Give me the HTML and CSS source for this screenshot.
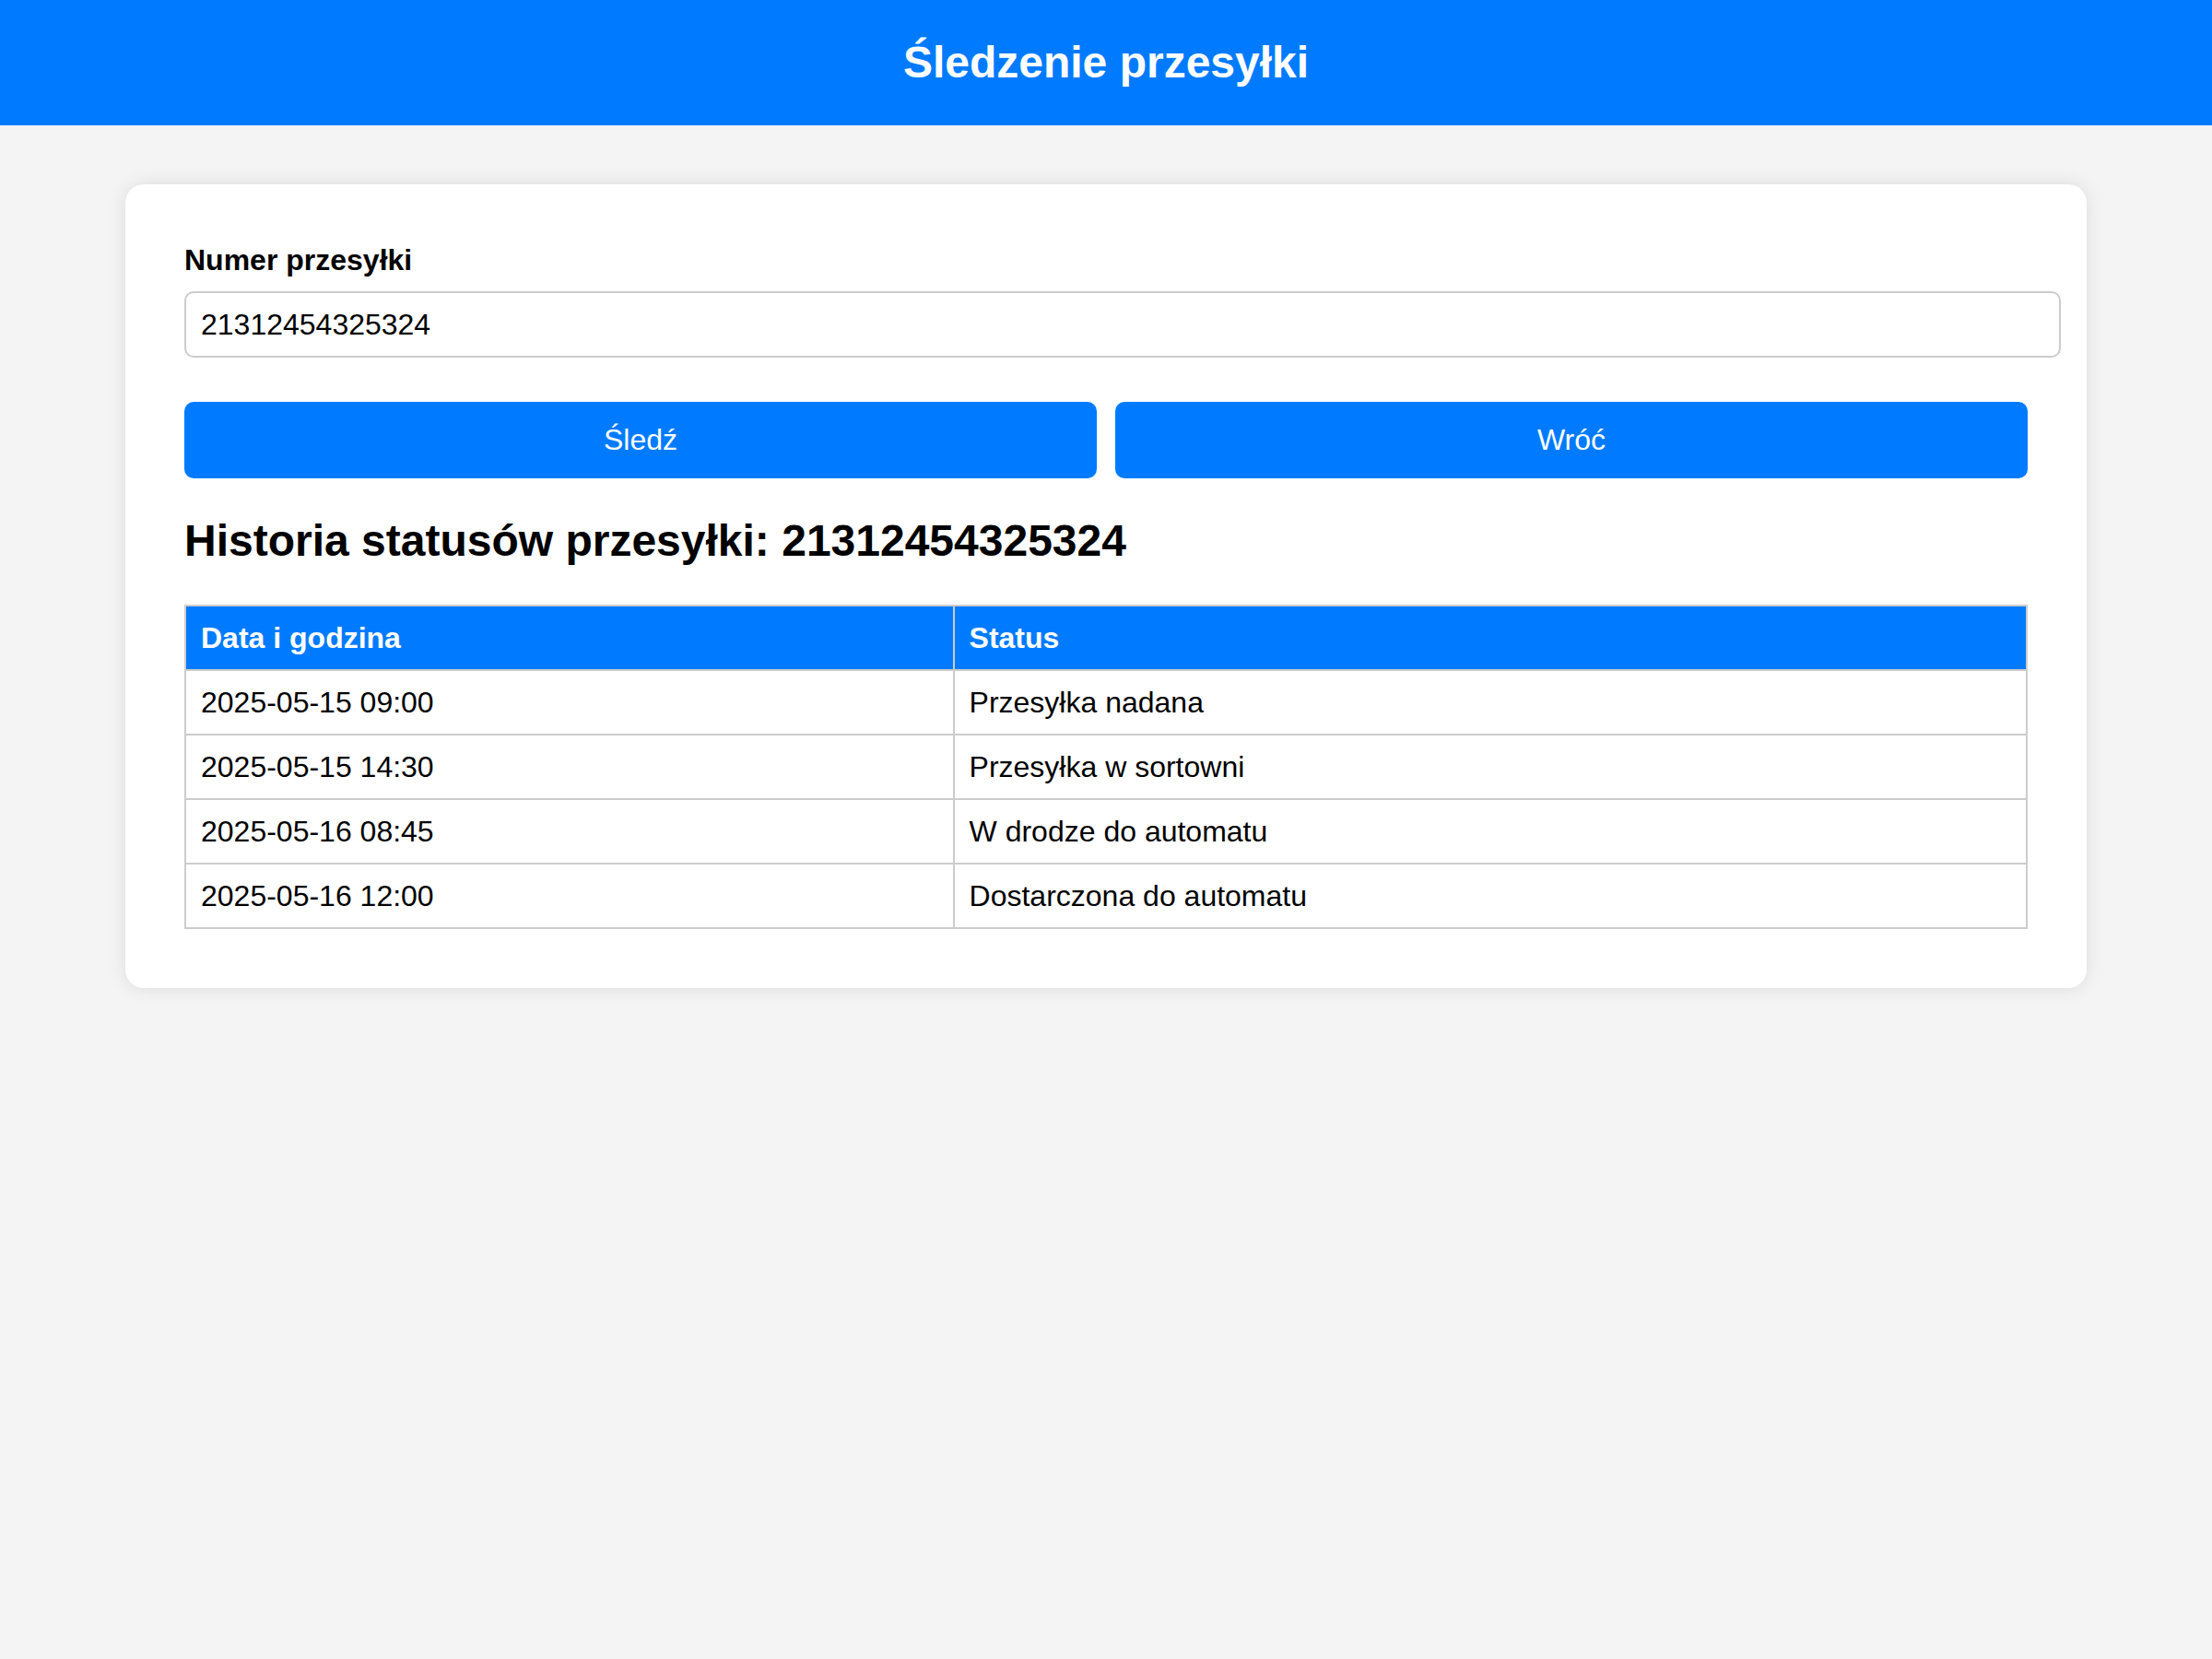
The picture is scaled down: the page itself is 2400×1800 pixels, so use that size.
FILE: index.html
```html
<!DOCTYPE html>
<html lang="pl">
<head>
<meta charset="utf-8">
<title>Śledzenie przesyłki</title>
<link rel="stylesheet" href="styles.css">
</head>
<body>
<header class="site-header">
  <h1 class="site-title">Śledzenie przesyłki</h1>
</header>
<main class="card">
  <form class="track-form">
    <label class="field-label" for="nr">Numer przesyłki</label>
    <input class="field-input" id="nr" type="text" value="21312454325324">
    <div class="actions">
      <button type="button" class="btn">Śledź</button>
      <button type="button" class="btn">Wróć</button>
    </div>
  </form>
  <h2 class="history-title">Historia statusów przesyłki: 21312454325324</h2>
  <table class="history">
    <thead>
      <tr><th>Data i godzina</th><th>Status</th></tr>
    </thead>
    <tbody>
      <tr><td>2025-05-15 09:00</td><td>Przesyłka nadana</td></tr>
      <tr><td>2025-05-15 14:30</td><td>Przesyłka w sortowni</td></tr>
      <tr><td>2025-05-16 08:45</td><td>W drodze do automatu</td></tr>
      <tr><td>2025-05-16 12:00</td><td>Dostarczona do automatu</td></tr>
    </tbody>
  </table>
</main>
</body>
</html>
```
FILE: styles.css
```css
html, body {
  margin: 0;
  padding: 0;
}
body {
  background: #f4f4f4;
  font-family: "Liberation Sans", Arial, sans-serif;
  font-size: 32px;
  color: #000;
}
.site-header {
  background: #007bff;
  color: #fff;
  padding: 40px;
  text-align: center;
}
.site-title {
  margin: 0;
  font-size: 48px;
  font-weight: bold;
  line-height: 56px;
}
.card {
  display: block;
  max-width: 2000px;
  margin: 64px auto;
  padding: 64px;
  background: #fff;
  border-radius: 20px;
  box-shadow: 0 0 20px rgba(0, 0, 0, 0.1);
}
.track-form {
  margin: 0;
}
.field-label {
  display: block;
  font-weight: bold;
  font-size: 32px;
  line-height: 36px;
  margin-bottom: 16px;
}
.field-input {
  display: block;
  width: 100%;
  padding: 16px;
  border: 2px solid #ccc;
  border-radius: 10px;
  font-family: "Liberation Sans", Arial, sans-serif;
  font-size: 32px;
  line-height: 36px;
  color: #000;
  background: #fff;
  margin: 0;
}
.actions {
  display: flex;
  gap: 20px;
  margin-top: 48px;
}
.btn {
  flex: 0 0 990px;
  background: #007bff;
  color: #fff;
  border: none;
  border-radius: 10px;
  padding: 24px;
  font-family: "Liberation Sans", Arial, sans-serif;
  font-size: 32px;
  line-height: 35px;
}
.history-title {
  font-size: 48px;
  font-weight: bold;
  margin: 40px 0 42px;
}
.history {
  width: 100%;
  border-collapse: collapse;
  font-size: 32px;
}
.history th,
.history td {
  border: 2px solid #ccc;
  padding: 16px;
  text-align: left;
  line-height: 36px;
}
.history th {
  background: #007bff;
  color: #fff;
  font-weight: bold;
}
```
